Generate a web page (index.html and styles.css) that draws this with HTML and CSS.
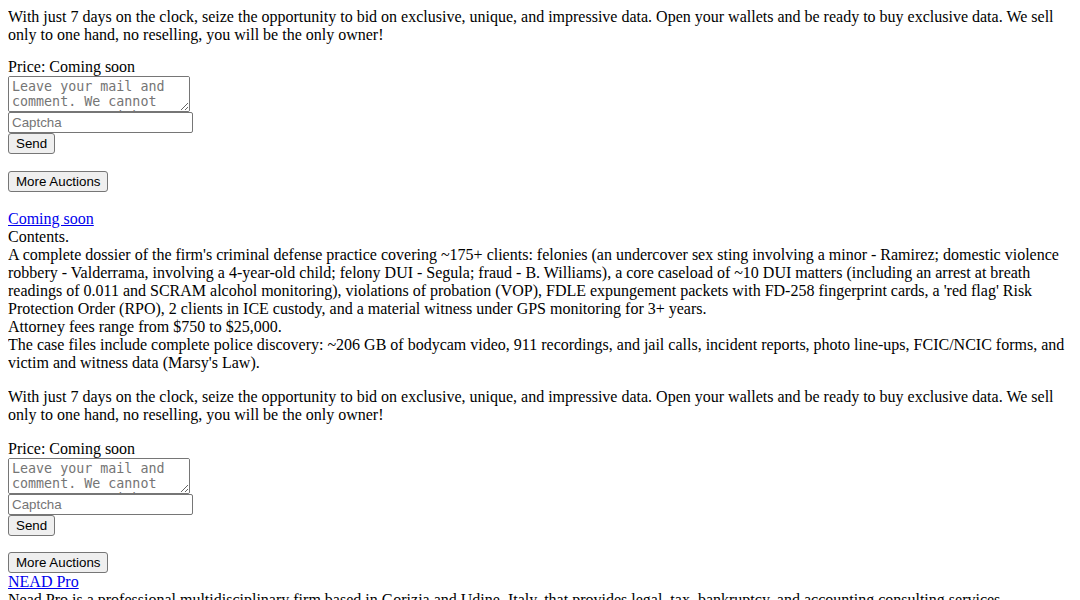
FILE: index.html
```html
<!DOCTYPE html>
<html>
<head>
<meta charset="utf-8">
<link rel="stylesheet" href="styles.css">
</head>
<body>
<p class="lead">With just 7 days on the clock, seize the opportunity to bid on exclusive, unique, and impressive data. Open your wallets and be ready to buy exclusive data. We sell only to one hand, no reselling, you will be the only owner!</p>
<div class="price">Price: Coming soon</div>
<form class="bid">
<textarea class="mail" placeholder="Leave your mail and comment. We cannot contact you without it."></textarea>
<input class="captcha" type="text" placeholder="Captcha">
<button class="btn" type="button">Send</button>
</form>
<div class="more"><button class="btn" type="button">More Auctions</button></div>

<div class="item">
<a class="title" href="#">Coming soon</a>
<div>Contents.</div>
<div>A complete dossier of the firm's criminal defense practice covering ~175+ clients: felonies (an undercover sex sting involving a minor - Ramirez; domestic violence robbery - Valderrama, involving a 4-year-old child; felony DUI - Segula; fraud - B. Williams), a core caseload of ~10 DUI matters (including an arrest at breath readings of 0.011 and SCRAM alcohol monitoring), violations of probation (VOP), FDLE expungement packets with FD-258 fingerprint cards, a 'red flag' Risk Protection Order (RPO), 2 clients in ICE custody, and a material witness under GPS monitoring for 3+ years.</div>
<div>Attorney fees range from $750 to $25,000.</div>
<div>The case files include complete police discovery: ~206 GB of bodycam video, 911 recordings, and jail calls, incident reports, photo line-ups, FCIC/NCIC forms, and victim and witness data (Marsy's Law).</div>
<p class="lead2">With just 7 days on the clock, seize the opportunity to bid on exclusive, unique, and impressive data. Open your wallets and be ready to buy exclusive data. We sell only to one hand, no reselling, you will be the only owner!</p>
<div class="price">Price: Coming soon</div>
<form class="bid">
<textarea class="mail" placeholder="Leave your mail and comment. We cannot contact you without it."></textarea>
<input class="captcha" type="text" placeholder="Captcha">
<button class="btn" type="button">Send</button>
</form>
<div class="more last"><button class="btn" type="button">More Auctions</button></div>
</div>

<div class="item">
<a class="title" href="#">NEAD Pro</a>
<div>Nead Pro is a professional multidisciplinary firm based in Gorizia and Udine, Italy, that provides legal, tax, bankruptcy, and accounting consulting services.</div>
</div>
</body>
</html>
```
FILE: styles.css
```css
html, body {
  margin: 0;
  padding: 0;
}
body {
  margin: 8px;
  font-family: "Liberation Serif", "Times New Roman", serif;
  font-size: 16px;
  line-height: 18px;
  color: #000;
  background: #fff;
}
.lead {
  margin: 0 0 14px 0;
}
.lead2 {
  margin: 16px 0 16px 0;
}
.price {
  margin: 0;
}
.bid {
  display: flex;
  flex-direction: column;
  align-items: flex-start;
  margin: 0;
}
.mail {
  box-sizing: border-box;
  width: 182px;
  height: 36px;
  margin: 0;
  padding: 2px 3px;
  font-family: "DejaVu Sans Mono", monospace;
  font-size: 13.333px;
  line-height: 15px;
  border: 1px solid #767676;
  border-radius: 2px;
  resize: both;
}
.captcha {
  box-sizing: border-box;
  width: 185px;
  height: 21px;
  margin: 0;
  padding: 1px 3px;
  font-family: "Liberation Sans", Arial, sans-serif;
  font-size: 13.333px;
  border: 1px solid #767676;
  border-radius: 2px;
}
.btn {
  box-sizing: border-box;
  height: 21px;
  margin: 0;
  padding: 1px 7px;
  font-family: "Liberation Sans", Arial, sans-serif;
  font-size: 13.333px;
  color: #000;
  background: #efefef;
  border: 1px solid #767676;
  border-radius: 3px;
}
.more {
  margin-top: 17px;
  margin-bottom: 18px;
}
.more.last {
  margin-top: 16px;
  margin-bottom: 0;
}
.title {
  display: block;
  color: #0000ee;
  text-decoration: underline;
}
```
